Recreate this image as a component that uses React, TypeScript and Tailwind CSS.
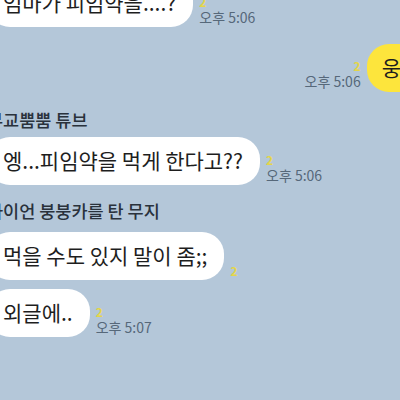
const font = { fontFamily: '"Noto Sans CJK KR", "Noto Sans", sans-serif' };

function Meta({ read, time }: { read?: string; time?: string }) {
  return (
    <div className="flex flex-col items-start pb-[3px] leading-none">
      {read && <span className="text-[12px] font-semibold text-[#e3d54a]">{read}</span>}
      {time && <span className="mt-[2px] text-[14px] text-[#56687a]">{time}</span>}
    </div>
  );
}

function LeftBubble({ text, read, time }: { text: string; read?: string; time?: string }) {
  return (
    <div className="flex items-end gap-[6px]">
      <div className="flex h-[48px] items-center rounded-[22px] bg-white pl-[15px] pr-[17px] text-[21px] text-[#1e1e1e]">
        {text}
      </div>
      <Meta read={read} time={time} />
    </div>
  );
}

export default function App() {
  return (
    <div className="h-[400px] w-[400px] overflow-hidden bg-[#b4c7d9]" style={font}>
      <div className="-ml-[12px] -mt-[21px] flex flex-col">
        <LeftBubble text="엄마가 피임약을....?" read="2" time="오후 5:06" />

        <div className="mt-[17px] flex items-end justify-end gap-[6px]">
          <div className="flex flex-col items-end pb-[4px] leading-none">
            <span className="text-[12px] font-semibold text-[#e3d54a]">2</span>
            <span className="mt-[2px] text-[14px] text-[#56687a]">오후 5:06</span>
          </div>
          <div className="-mr-[16px] flex h-[48px] items-center rounded-l-[22px] bg-[#fde53c] pl-[15px] pr-[15px] text-[21px] text-[#1e1e1e]">
            웅
          </div>
        </div>

        <div className="-ml-[1px] mt-[17px] text-[17.5px] font-medium leading-[22px] text-[#2a323c]">부교뿜뿜 튜브</div>
        <div className="mt-[6px]">
          <LeftBubble text="엥...피임약을 먹게 한다고??" read="2" time="오후 5:06" />
        </div>

        <div className="-ml-[1px] mt-[15px] text-[17.5px] font-medium leading-[22px] text-[#2a323c]">라이언 붕붕카를 탄 무지</div>
        <div className="mt-[10px]">
          <LeftBubble text="먹을 수도 있지 말이 좀;;" read="2" />
        </div>

        <div className="mt-[9px]">
          <LeftBubble text="외글에.." read="2" time="오후 5:07" />
        </div>
      </div>
    </div>
  );
}
